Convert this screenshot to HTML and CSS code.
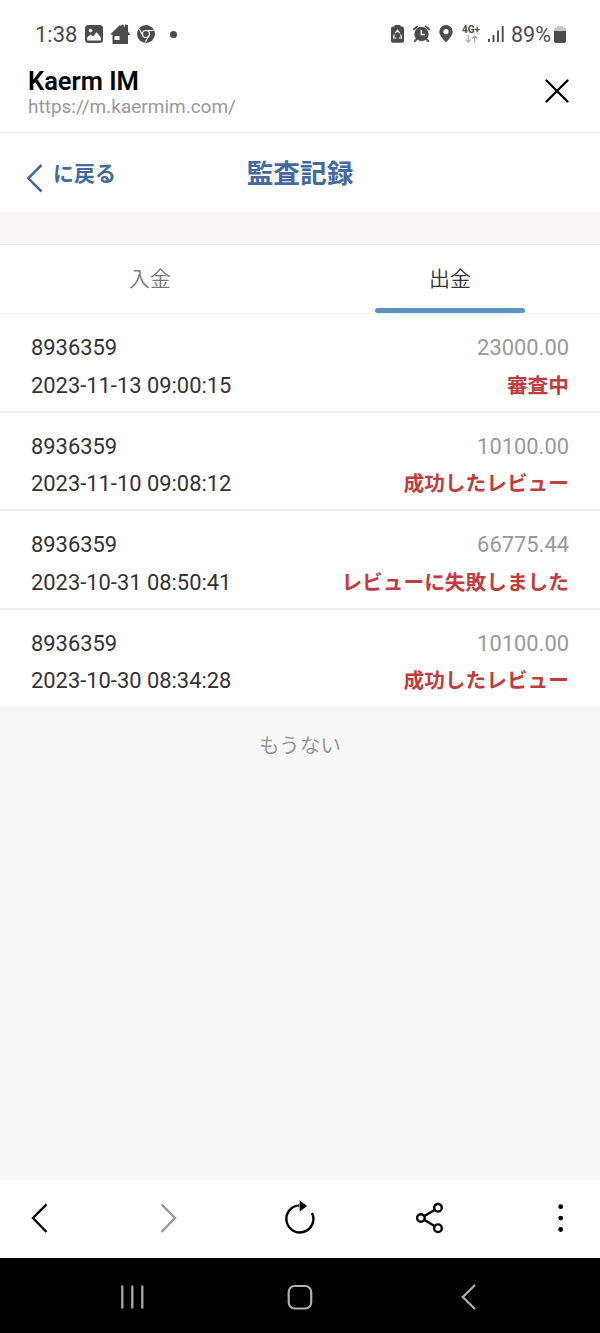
FILE: index.html
```html
<!DOCTYPE html>
<html lang="ja">

<head>
  <meta charset="UTF-8">
  <title>監査記録</title>
  <link rel="stylesheet" href="styles.css">
</head>

<body>
  <div class="status">
    <span class="clock">1:38</span>
    <svg class="s-pic" width="18" height="18" viewBox="0 0 18 18"><rect width="18" height="18" rx="3.5" fill="#4c4c4c"/><circle cx="5.6" cy="5.6" r="1.8" fill="#fff"/><path d="M2.200 15.500v-3l3.300-3 2.700 2 3.300-4.200 4.300 5v3.200z" fill="#fff"/></svg>
    <svg class="s-home" width="20" height="20" viewBox="0 0 20 20"><path d="M0 10.500 10 1l1 1 1-1.500 1.600.5.400 3 1-3.500 3 .500v6.500l2.500 3.500h-2.500V20H2.500v-9.500z" fill="#4c4c4c"/><rect x="4.500" y="12" width="5" height="4" fill="#fff"/></svg>
    <svg class="s-chrome" width="18" height="18" viewBox="0 0 18 18"><circle cx="9" cy="9" r="9" fill="#4c4c4c"/><circle cx="9" cy="9" r="3.500" fill="none" stroke="#fff" stroke-width="1.100"/><path d="M9 5.500h7.600M6 10.600 2.300 4.200M12 10.600 8.200 17.300" stroke="#fff" stroke-width="1.100"/></svg>
    <span class="dot"></span>
    <div class="status-right">
      <svg class="s-saver" width="13" height="18" viewBox="0 0 13 18"><path d="M3.500 0h6v1.500h1.500Q13 1.500 13 3.500v12.500q0 1.800-1.800 1.800H1.800Q0 17.800 0 16V3.500q0-2 2-2h1.500z" fill="#4c4c4c"/><path d="M4.300 8.200 6.500 5.200l2.200 3M9.700 9.500l.900 3.500H7.800M5.400 13H2.400l.9-3.500" fill="none" stroke="#fff" stroke-width="1.200"/></svg>
      <svg class="s-alarm" width="17" height="18" viewBox="0 0 17 18"><circle cx="8.500" cy="9" r="7.200" fill="#4c4c4c"/><path d="M1 4.300 4.300 1.400M16 4.300l-3.300-2.900M3.800 14l-2 2M13.200 14l2 2" stroke="#4c4c4c" stroke-width="1.900" stroke-linecap="round"/><path d="M8.300 5v4.600h3.700" fill="none" stroke="#fff" stroke-width="1.500"/></svg>
      <svg class="s-pin" width="14" height="18" viewBox="0 0 14 18"><path d="M7 0a6.700 6.700 0 0 1 6.700 6.700C13.700 11 9 14.500 7 17.500 5 14.500.300 11 .300 6.700A6.700 6.700 0 0 1 7 0z" fill="#4c4c4c"/><circle cx="7" cy="6.700" r="2.600" fill="#fff"/></svg>
      <span class="net">4G+
        <svg width="13" height="8" viewBox="0 0 13 8"><path d="M3.300 0v7M.600 4.400l2.700 2.800L6 4.400M9.600 8V1M6.900 3.600 9.600.800l2.700 2.800" fill="none" stroke="#aaa" stroke-width="1.200"/></svg>
      </span>
      <svg class="s-bars" width="16" height="16" viewBox="0 0 16 16"><path d="M1 16v-3.200M5.500 16V9M10 16V4.500M14.700 16V0" stroke="#4c4c4c" stroke-width="1.900"/></svg>
      <span class="percent">89%</span>
      <svg class="s-batt" width="12" height="17" viewBox="0 0 12 17"><path d="M3 0h6v1.500h1.500Q12 1.500 12 3v3H0V3q0-1.500 1.500-1.500H3z" fill="#c6c6c6"/><path d="M0 5h12v10q0 2-2 2H2q-2 0-2-2z" fill="#4c4c4c"/></svg>
    </div>
  </div>

  <div class="browser">
    <div>
      <div class="site">Kaerm IM</div>
      <div class="url">https://m.kaermim.com/</div>
    </div>
    <svg width="24" height="24" viewBox="0 0 24 24"><path d="M1.500 1.500l21 21M22.500 1.500l-21 21" stroke="#000" stroke-width="2.300" stroke-linecap="round"/></svg>
  </div>

  <div class="header">
    <div class="back">
      <svg width="18" height="30" viewBox="0 0 18 30"><path d="M16.500 2 3.300 15.300 16.500 28.500" fill="none" stroke="#43699f" stroke-width="2.500"/></svg>
      <span>に戻る</span>
    </div>
    <h1>監査記録</h1>
  </div>

  <div class="tabs">
    <div class="tab">入金</div>
    <div class="tab active">出金</div>
  </div>

  <div class="list">
    <div class="item">
      <div class="row"><span>8936359</span><span class="money">23000.00</span></div>
      <div class="row"><span>2023-11-13 09:00:15</span><span class="state">審査中</span></div>
    </div>
    <div class="item">
      <div class="row"><span>8936359</span><span class="money">10100.00</span></div>
      <div class="row"><span>2023-11-10 09:08:12</span><span class="state">成功したレビュー</span></div>
    </div>
    <div class="item">
      <div class="row"><span>8936359</span><span class="money">66775.44</span></div>
      <div class="row"><span>2023-10-31 08:50:41</span><span class="state">レビューに失敗しました</span></div>
    </div>
    <div class="item">
      <div class="row"><span>8936359</span><span class="money">10100.00</span></div>
      <div class="row"><span>2023-10-30 08:34:28</span><span class="state">成功したレビュー</span></div>
    </div>
  </div>

  <div class="more">もうない</div>

  <div class="toolbar">
    <svg width="40" height="40" viewBox="0 0 40 40"><path d="M26.500 6.300 13 20l13.500 14" fill="none" stroke="#000" stroke-width="2.400"/></svg>
    <svg width="40" height="40" viewBox="0 0 40 40"><path d="M11.500 6.300 25 20 11.500 34" fill="none" stroke="#999" stroke-width="2.400"/></svg>
    <svg width="40" height="40" viewBox="0 0 40 40"><path d="M19.500 7.400A13.500 13.500 0 1 0 32 15" fill="none" stroke="#000" stroke-width="2.400"/><path d="M19.700 2.500v11l7.500-5.500z" fill="#000"/></svg>
    <svg width="40" height="40" viewBox="0 0 40 40"><g fill="none" stroke="#000" stroke-width="2.400"><path d="m14.500 18 10-6M14.500 22l10 6"/><circle cx="10.900" cy="20" r="3.800"/><circle cx="28" cy="9.800" r="3.800"/><circle cx="28" cy="30.200" r="3.800"/></g></svg>
    <svg width="40" height="40" viewBox="0 0 40 40"><circle cx="20.700" cy="8.700" r="2.400"/><circle cx="20.700" cy="20.100" r="2.400"/><circle cx="20.700" cy="31.500" r="2.400"/></svg>
  </div>

  <div class="navbar">
    <svg width="30" height="30" viewBox="0 0 30 30"><path d="M5.300 3.500v23M15.300 3.500v23M25.300 3.500v23" stroke="#b0b0b0" stroke-width="2.200"/></svg>
    <svg width="30" height="30" viewBox="0 0 30 30"><rect x="3.700" y="4" width="22.500" height="22.500" rx="6" fill="none" stroke="#b0b0b0" stroke-width="2.200"/></svg>
    <svg width="30" height="30" viewBox="0 0 30 30"><path d="M22 3 9.800 15 22 27" fill="none" stroke="#b0b0b0" stroke-width="2.200"/></svg>
  </div>
</body>
</html>
```

FILE: styles.css
```css
* {
  box-sizing: border-box;
}
body {
  margin: 0;
  height: 1333px;
  display: flex;
  flex-direction: column;
  background: #f8f6f7;
  font-family: Roboto, "Noto Sans CJK JP", sans-serif;
  color: #333;
}
svg {
  display: block;
  flex: none;
}
.status {
  height: 66px;
  padding: 2px 34px 0 35px;
  display: flex;
  align-items: center;
  background: #fff;
  color: #4c4c4c;
  font-size: 22px;
}
.clock {
  width: 50px;
}
.s-home {
  margin-left: 7px;
}
.s-chrome {
  margin-left: 7px;
}
.dot {
  width: 7px;
  height: 7px;
  margin-left: 15px;
  border-radius: 50%;
  background: #4c4c4c;
}
.status-right {
  margin-left: auto;
  display: flex;
  align-items: center;
}
.s-alarm {
  margin-left: 9px;
}
.s-pin {
  margin-left: 9px;
}
.net {
  width: 20px;
  margin-left: 9px;
  font-size: 10px;
  line-height: 10px;
  font-weight: bold;
}
.net svg {
  margin-left: 3px;
}
.s-bars {
  margin-left: 6px;
}
.percent {
  width: 40px;
  margin-left: 7px;
  font-size: 21.500px;
}
.s-batt {
  margin-left: 3px;
}
.browser {
  height: 67px;
  padding: 0 31px 0 28px;
  display: flex;
  justify-content: space-between;
  background: #fff;
  border-bottom: 1px solid #e8e8e8;
}
.browser > svg {
  margin-top: 13px;
}
.site {
  padding-top: 1px;
  color: #000;
  font-size: 25.500px;
  line-height: 28px;
  font-weight: 600;
}
.url {
  color: #999;
  font-size: 19px;
  line-height: 24px;
}
.header {
  height: 79px;
  display: grid;
  grid-template-columns: 1fr 1fr 1fr;
  background: #fff;
  color: #43699f;
  font-weight: bold;
}
.back {
  padding: 30px 0 0 25px;
  display: flex;
  font-size: 21px;
}
.back span {
  margin: -4px 0 0 10px;
  line-height: 30px;
}
.header h1 {
  margin: 0;
  padding-top: 21px;
  text-align: center;
  font-size: 26.700px;
  line-height: 40px;
}
.tabs {
  height: 70px;
  margin-top: 32px;
  display: flex;
  background: #fff;
  border-top: 1px solid #f0eff0;
  border-bottom: 1px solid #f2f2f4;
}
.tab {
  flex: 1;
  padding-top: 1px;
  display: flex;
  flex-direction: column;
  align-items: center;
  color: #777;
  font-size: 21px;
  line-height: 66px;
  font-weight: 350;
}
.active {
  color: #333;
}
.active::after {
  content: "";
  width: 150px;
  height: 5px;
  margin-top: -4px;
  border-radius: 3px;
  background: #5c92c4;
}
.item {
  height: 98.500px;
  padding: 15px 31px 0 31px;
  background: #fff;
  border-bottom: 2px solid #f0f0f2;
}
.item:last-child {
  height: 96px;
  border-bottom: none;
}
.row {
  height: 37.500px;
  display: flex;
  justify-content: space-between;
  font-size: 21.900px;
  line-height: 37.500px;
}
.money {
  color: #999;
}
.state {
  padding-top: 1px;
  color: #c13d3d;
  font-size: 20.700px;
  font-weight: bold;
}
.more {
  flex: 1;
  padding-top: 25px;
  background: #f8f7f8;
  color: #909090;
  font-size: 20.700px;
  line-height: 30px;
  text-align: center;
  font-weight: 350;
}
.toolbar {
  height: 78px;
  padding: 0 20px 3px;
  display: flex;
  align-items: center;
  justify-content: space-between;
  background: #fff;
}
.navbar {
  height: 75px;
  padding: 2px 117px 0;
  display: flex;
  align-items: center;
  justify-content: space-between;
  background: #000;
}
```
